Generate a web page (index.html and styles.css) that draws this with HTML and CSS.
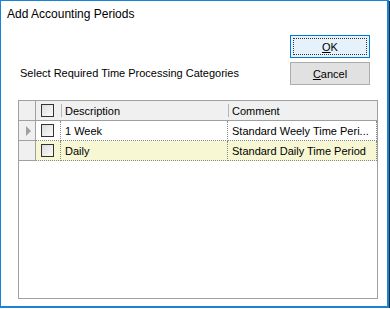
FILE: index.html
```html
<!DOCTYPE html>
<html lang="en">
<head>
<meta charset="UTF-8">
<title>Add Accounting Periods</title>
<link rel="stylesheet" href="styles.css">
</head>
<body>
<div class="dialog">
  <div class="title">Add Accounting Periods</div>

  <div class="top">
    <div class="prompt">Select Required Time Processing Categories</div>
    <div class="buttons">
      <button class="btn btn-default"><span class="focus"><u>O</u>K</span></button>
      <button class="btn"><span><u>C</u>ancel</span></button>
    </div>
  </div>

  <div class="grid">
    <div class="row head">
      <div class="rh"></div>
      <div class="cell chk"><span class="box"></span></div>
      <div class="cell desc">Description</div>
      <div class="cell comm">Comment</div>
    </div>
    <div class="row current">
      <div class="rh"><span class="arrow"></span></div>
      <div class="cell chk"><span class="box"></span></div>
      <div class="cell desc">1 Week</div>
      <div class="cell comm">Standard Weely Time Peri...</div>
    </div>
    <div class="row alt">
      <div class="rh"></div>
      <div class="cell chk"><span class="box"></span></div>
      <div class="cell desc">Daily</div>
      <div class="cell comm">Standard Daily Time Period</div>
    </div>
  </div>
</div>
</body>
</html>
```

FILE: styles.css
```css
html, body {
  margin: 0;
  padding: 0;
  background: #fff;
}
body {
  font-family: "Liberation Sans", Arial, sans-serif;
  font-size: 11px;
  color: #000;
}
.dialog {
  width: 386px;
  height: 305px;
  border: 1px solid #1883d7;
  border-right-width: 2px;
  border-bottom-width: 2px;
  box-shadow: 1px 1px 0 #2b2b2b;
  background: #fff;
}
.title {
  padding: 6px 0 0 6px;
  height: 19px;
  line-height: 15px;
  font-size: 12px;
}
.top {
  display: flex;
  align-items: flex-end;
  justify-content: space-between;
  padding: 0 17px 0 19px;
  margin-top: 9px;
}
.prompt {
  line-height: 13px;
  padding-bottom: 5px;
}
.buttons {
  display: flex;
  flex-direction: column;
  gap: 4px;
}
.btn {
  width: 80px;
  height: 23px;
  margin: 0;
  padding: 2px;
  border: 1px solid #adadad;
  background: #e1e1e1;
  font-family: inherit;
  font-size: 11px;
  color: #000;
  display: flex;
}
.btn span {
  flex: 1;
  display: flex;
  align-items: center;
  justify-content: center;
  border: 1px solid transparent;
}
.btn-default {
  border-color: #0078d7;
  background: #e5f1fb;
}
.btn-default .focus {
  border: 1px dotted #333;
}
.grid {
  margin: 15px 0 0 17px;
  width: 358px;
  height: 197px;
  border: 1px solid #a0a0a0;
}
.row {
  display: flex;
  height: 20px;
}
.row.head {
  height: 19px;
  background: #f0f0f0;
  border-bottom: 1px solid #a0a0a0;
}
.rh {
  width: 17px;
  border-right: 1px solid #a0a0a0;
  background: #f0f0f0;
  display: flex;
  align-items: center;
  justify-content: center;
  box-sizing: border-box;
}
.row:not(.head) .rh {
  border-bottom: 1px solid #a0a0a0;
}
.cell {
  box-sizing: border-box;
  display: flex;
  align-items: center;
  white-space: nowrap;
  overflow: hidden;
}
.row:not(.head) .cell {
  border-bottom: 1px dotted #888;
  border-right: 1px dotted #888;
}
.chk {
  width: 25px;
  padding-left: 5px;
}
.desc {
  width: 167px;
  padding-left: 4px;
}
.comm {
  flex: 1;
  padding-left: 4px;
}
.head .desc, .head .comm {
  position: relative;
}
.head .desc::before, .head .comm::before {
  content: "";
  position: absolute;
  left: 0;
  top: 3px;
  bottom: 3px;
  border-left: 1px solid #b5b5b5;
}
.row.alt .cell {
  background: #f7f7d4;
}
.box {
  width: 11px;
  height: 11px;
  border: 1px solid #333;
  background: linear-gradient(135deg, #dcdcdc, #fbfbfb);
}
.arrow {
  width: 0;
  height: 0;
  border-top: 5px solid transparent;
  border-bottom: 5px solid transparent;
  border-left: 5px solid #a0a0a0;
  margin-left: 2px;
}
```
